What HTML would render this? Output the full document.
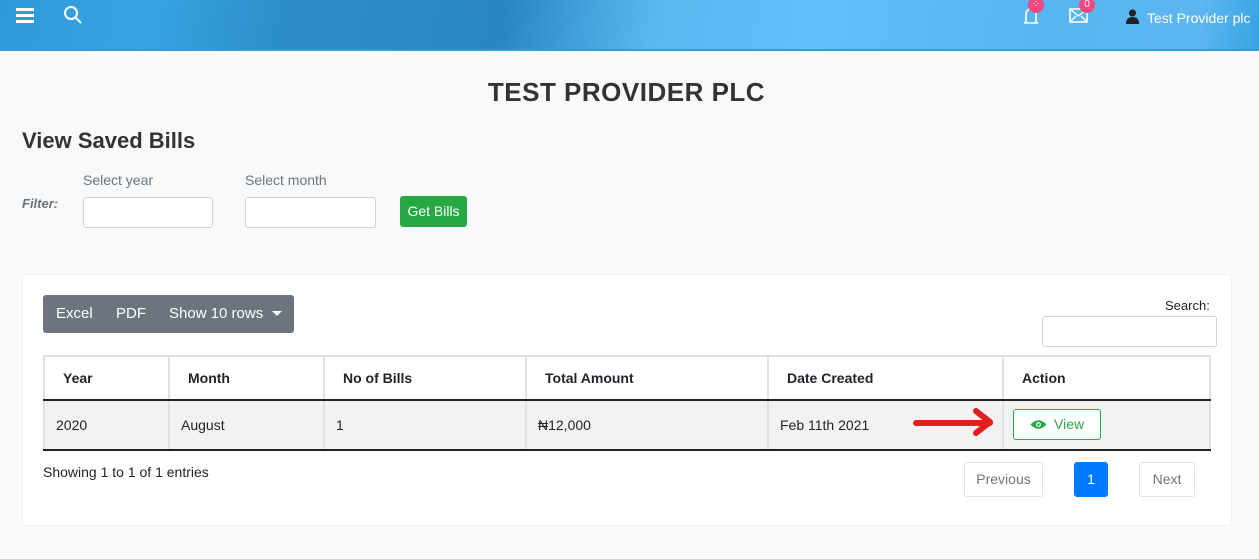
<!DOCTYPE html>
<html><head><meta charset="utf-8"><style>
*{box-sizing:border-box;margin:0;padding:0}
body{width:1259px;height:559px;overflow:hidden;background:#f8f9fb;font-family:"Liberation Sans","DejaVu Sans",sans-serif;color:#212529;position:relative}
.hdr{position:absolute;left:0;top:0;width:1259px;height:51px;background:linear-gradient(100deg,#2f9ad8 0%,#37a3e2 12%,#2d8fc9 22%,#2b86bf 40%,#5bb8ef 52%,#62c0fb 65%,#57b5f1 82%,#5cb6ef 95%,#37a3e2 100%);border-bottom:2px solid #3a9ad4}
.abs{position:absolute}
.t{position:absolute;white-space:nowrap}
.badge{position:absolute;width:16px;height:16px;border-radius:50%;background:#f0487f;color:#fff;font-size:10px;text-align:center;line-height:15px}
input{position:absolute;height:31px;border:1px solid #ced4da;border-radius:3px;background:#fff}
.card{position:absolute;left:23px;top:275px;width:1208px;height:250px;background:#fff;border-radius:4px;box-shadow:0 0 2px rgba(0,0,0,.08)}
table{position:absolute;left:43px;top:355px;border-collapse:collapse;font-size:14px}
th{height:44px;border:2px solid #dee2e6;border-bottom:2px solid #222;text-align:left;font-weight:bold;padding-left:18px}
td{height:50px;background:#f2f2f2;border-left:2px solid #dee2e6;border-right:2px solid #dee2e6;border-bottom:2px solid #222;padding-left:11px}
.pg{position:absolute;height:35px;border:1px solid #dee2e6;border-radius:3px;font-size:14px;color:#6c757d;text-align:center;line-height:33px;background:#fff}
</style></head><body>
<div class="hdr">
<div class="abs" style="left:16px;top:8px;width:18px;height:3px;background:#fff"></div>
<div class="abs" style="left:16px;top:14px;width:18px;height:3px;background:#fff"></div>
<div class="abs" style="left:16px;top:20px;width:18px;height:3px;background:#fff"></div>
<svg class="abs" style="left:63px;top:5px" width="20" height="20" viewBox="0 0 20 20"><circle cx="8" cy="8" r="6" fill="none" stroke="#fff" stroke-width="2"/><path d="M12 12l6 6" stroke="#fff" stroke-width="2"/></svg>
<svg class="abs" style="left:1022px;top:6px" width="18" height="20" viewBox="0 0 18 20"><path d="M4 16V8a5 5 0 0110 0v8l2 1H2z" fill="none" stroke="#fff" stroke-width="1.6"/></svg>
<div class="badge" style="left:1028px;top:-3px">⁘</div>
<svg class="abs" style="left:1069px;top:8px" width="19" height="15" viewBox="0 0 19 15"><rect x="1" y="1" width="17" height="13" fill="none" stroke="#fff" stroke-width="1.6"/><path d="M1 1l8.5 7L18 1M1 14l6-6M18 14l-6-6" fill="none" stroke="#fff" stroke-width="1.4"/></svg>
<div class="badge" style="left:1079px;top:-3px">0</div>
<svg class="abs" style="left:1126px;top:9px" width="13" height="15" viewBox="0 0 13 15"><circle cx="6.5" cy="4" r="3.5" fill="#222"/><path d="M0 15q0-7 6.5-7t6.5 7z" fill="#222"/></svg>
<div class="t" style="left:1147px;top:10px;color:#fff;font-size:14px">Test Provider plc</div>
</div>
<div class="t" style="left:0;width:1253px;text-align:center;top:77px;font-size:26px;font-weight:bold;letter-spacing:0.5px;color:#333">TEST PROVIDER PLC</div>
<div class="t" style="left:22px;top:128px;font-size:22px;font-weight:bold;color:#333">View Saved Bills</div>
<div class="t" style="left:83px;top:172px;font-size:14px;color:#6c757d">Select year</div>
<div class="t" style="left:245px;top:172px;font-size:14px;color:#6c757d">Select month</div>
<div class="t" style="left:22px;top:196px;font-size:13px;color:#6c757d;font-style:italic;font-weight:bold">Filter:</div>
<input style="left:83px;top:197px;width:130px">
<input style="left:245px;top:197px;width:131px">
<div class="abs" style="left:400px;top:196px;width:67px;height:31px;background:#28a745;border-radius:3px;color:#fff;font-size:14px;text-align:center;line-height:31px">Get Bills</div>
<div class="card"></div>
<div class="abs" style="left:43px;top:295px;width:251px;height:38px;background:#6c757d;border-radius:3px;color:#fff;font-size:15px;line-height:38px">
<span class="t" style="left:13px">Excel</span><span class="t" style="left:73px">PDF</span><span class="t" style="left:126px">Show 10 rows</span>
<div class="abs" style="left:229px;top:16px;width:0;height:0;border-left:5px solid transparent;border-right:5px solid transparent;border-top:5px solid #fff"></div></div>
<div class="t" style="left:1165px;top:298px;font-size:13px">Search:</div>
<input style="left:1042px;top:316px;width:175px">
<table>
<tr><th style="width:125px">Year</th><th style="width:155px">Month</th><th style="width:202px">No of Bills</th><th style="width:242px">Total Amount</th><th style="width:235px">Date Created</th><th style="width:207px">Action</th></tr>
<tr><td>2020</td><td>August</td><td>1</td><td>₦12,000</td><td>Feb 11th 2021</td><td></td></tr>
</table>
<svg class="abs" style="left:910px;top:405px" width="90" height="32" viewBox="0 0 90 32"><path d="M6 18H80M66 6l14 11-14 11" fill="none" stroke="#e02020" stroke-width="6" stroke-linecap="round" stroke-linejoin="round"/></svg>
<div class="abs" style="left:1013px;top:409px;width:88px;height:31px;border:1px solid #28a745;border-radius:3px;background:#fff;color:#28a745;font-size:14px;line-height:29px">
<svg class="abs" style="left:16px;top:9px" width="17" height="11" viewBox="0 0 17 11"><path d="M0.5 5.5Q8.5-3 16.5 5.5Q8.5 14 0.5 5.5z" fill="#28a745"/><circle cx="8.5" cy="5.5" r="2.4" fill="#fff"/><circle cx="8.5" cy="5.5" r="1.3" fill="#28a745"/></svg>
<span class="t" style="left:40px">View</span></div>
<div class="t" style="left:43px;top:464px;font-size:14px">Showing 1 to 1 of 1 entries</div>
<div class="pg" style="left:964px;top:462px;width:79px">Previous</div>
<div class="pg" style="left:1074px;top:462px;width:34px;background:#007bff;border-color:#007bff;color:#fff">1</div>
<div class="pg" style="left:1139px;top:462px;width:56px">Next</div>
</body></html>
